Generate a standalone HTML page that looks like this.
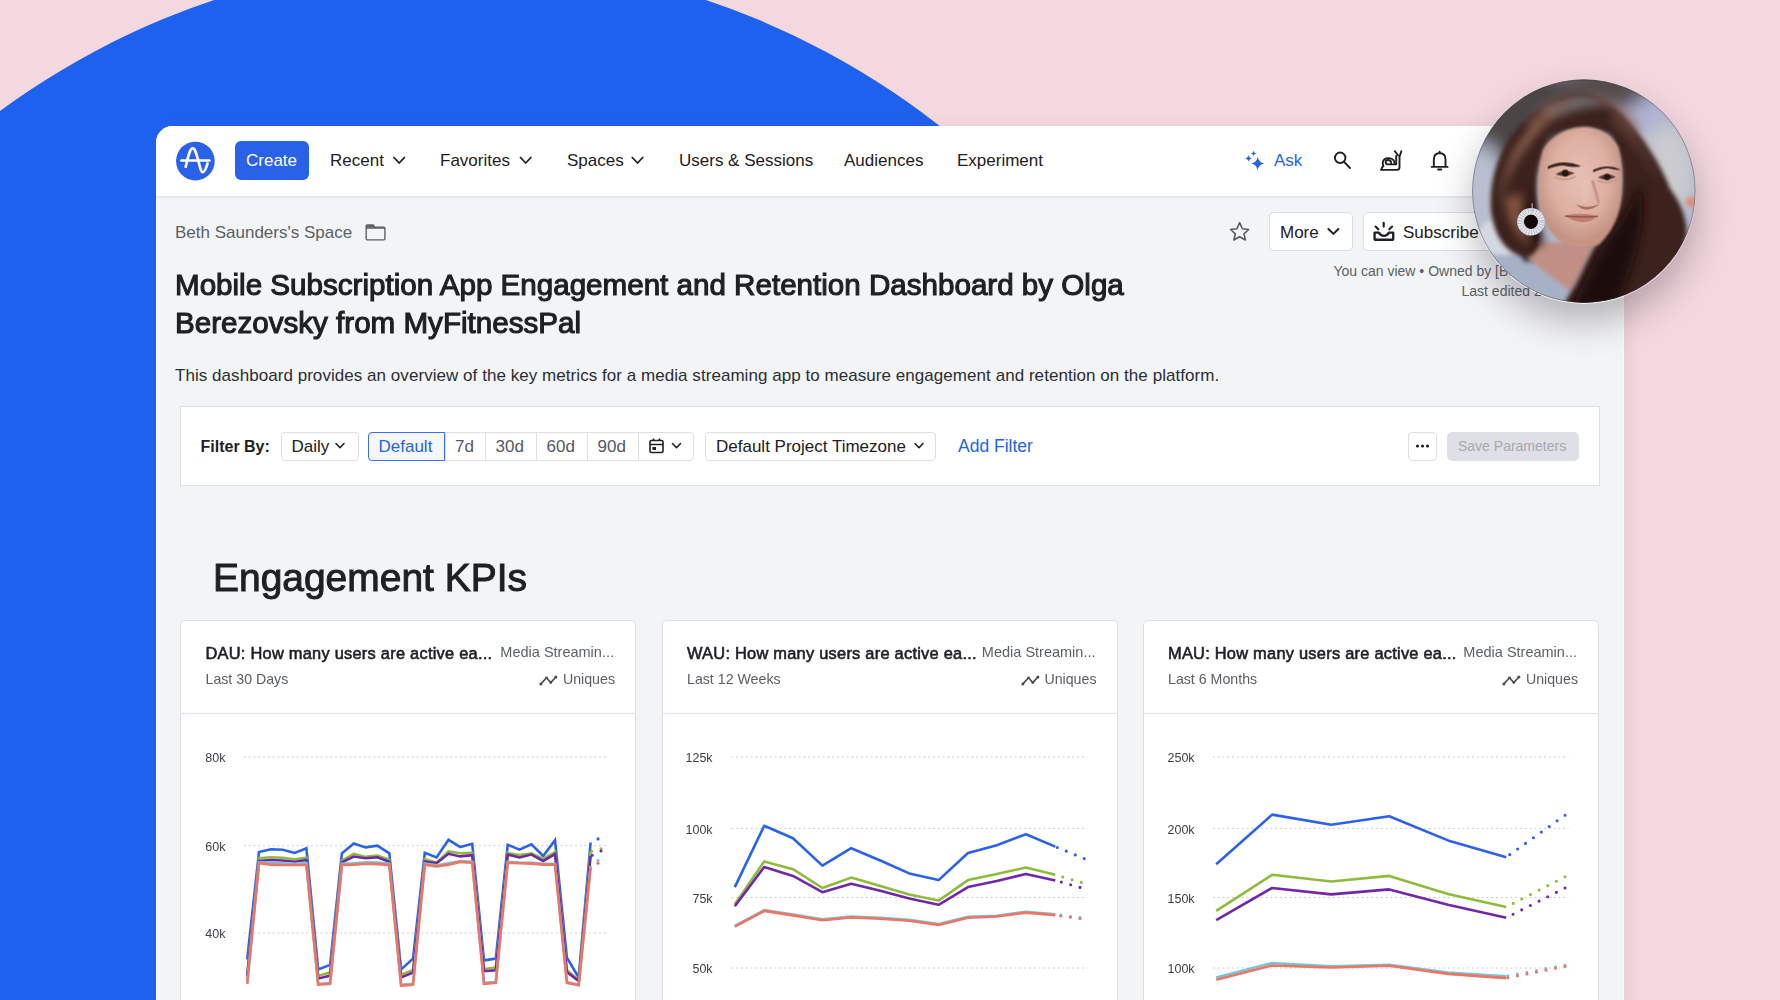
<!DOCTYPE html>
<html><head><meta charset="utf-8">
<style>
*{box-sizing:border-box;margin:0;padding:0}
html,body{width:1780px;height:1000px;overflow:hidden}
body{background:#f4d8df;position:relative;font-family:"Liberation Sans",sans-serif;color:#1e2024}
#blue{position:absolute;left:-316px;top:-40px;width:1552px;height:1552px;border-radius:50%;background:#1f61ef}
#win{position:absolute;left:156px;top:126px;width:1468px;height:900px;background:#f3f4f6;border-radius:17px 17px 0 0;overflow:hidden;box-shadow:inset 1px 0 0 #fff,inset -1px 0 0 #f8f9fa,5px 0 14px rgba(120,50,70,0.07)}
#nav{position:absolute;left:0;top:0;width:100%;height:72px;background:#fff;border-bottom:2px solid #e6e8eb}
.t{position:absolute;white-space:nowrap;line-height:1}
.nav{font-size:17px;color:#1e2024}
.lab{font-size:12.5px;color:#3c3f44}
svg{position:absolute;overflow:visible}
</style></head>
<body>
<div id="blue"></div>
<div id="win">
  <div id="nav"></div>
</div>
<!-- NAV -->
<svg style="left:172px;top:138px;width:48px;height:48px" viewBox="0 0 1000 1000">
  <circle cx="487" cy="480" r="403" fill="#2962e9"/>
  <path d="M195 470 L780 470" stroke="#fff" stroke-width="52" stroke-linecap="round" fill="none"/>
  <path d="M285 600 C330 420 370 215 430 215 C490 215 520 380 560 520 C590 640 610 710 640 710 C690 710 720 600 740 530" stroke="#fff" stroke-width="56" stroke-linecap="round" fill="none"/>
</svg>
<div style="position:absolute;left:235px;top:141px;width:74px;height:39px;background:#2962e9;border-radius:6px"></div>
<div class="t nav" style="left:246px;top:152px;color:#fff">Create</div>
<div class="t nav" style="left:330px;top:152px">Recent</div>
<div class="t nav" style="left:440px;top:152px">Favorites</div>
<div class="t nav" style="left:567px;top:152px">Spaces</div>
<div class="t nav" style="left:679px;top:152px">Users &amp; Sessions</div>
<div class="t nav" style="left:844px;top:152px">Audiences</div>
<div class="t nav" style="left:957px;top:152px">Experiment</div>
<svg style="left:0;top:0;width:1780px;height:1000px" viewBox="0 0 1780 1000">
  <g stroke="#1e2024" stroke-width="1.8" fill="none" stroke-linecap="round" stroke-linejoin="round">
    <path d="M394 157.5 L399.2 163 L404.4 157.5"/>
    <path d="M520.5 157.5 L525.7 163 L530.9 157.5"/>
    <path d="M632.3 157.5 L637.5 163 L642.7 157.5"/>
  </g>
</svg>
<svg style="left:1240px;top:145px;width:70px;height:30px" viewBox="0 0 1780 763">
  <g fill="#2563eb">
    <path d="M450 300 Q470 450 620 470 Q470 490 445 650 Q430 490 280 470 Q430 450 450 300Z"/>
    <path d="M215 245 Q225 330 310 340 Q225 350 215 435 Q205 350 125 340 Q205 330 215 245Z"/>
    <path d="M345 145 Q353 207 420 215 Q353 223 345 285 Q337 223 275 215 Q337 207 345 145Z"/>
  </g>
</svg>
<div class="t nav" style="left:1274px;top:151.5px;color:#2563eb">Ask</div>
<svg style="left:1325px;top:145px;width:130px;height:32px" viewBox="0 0 1780 438">
  <g stroke="#1e2024" stroke-width="26" fill="none" stroke-linecap="round" stroke-linejoin="round">
    <circle cx="208" cy="175" r="72"/>
    <path d="M265 235 L342 315"/>
    <path d="M770 340 L985 340 Q1020 340 1020 305 L1020 160 M1020 160 L1045 85 M1000 140 L955 85 M975 150 L975 265 L870 265 Q830 265 830 235 Q830 205 865 205 Q905 205 905 245"/>
    <path d="M770 340 Q780 300 800 290 Q790 270 790 240 Q800 180 870 180 Q950 180 955 260"/>
    <path d="M1490 295 L1490 200 Q1490 115 1570 110 Q1650 115 1650 200 L1650 295 M1462 300 L1678 300 M1570 90 L1570 108"/>
    <path d="M1548 335 L1592 335"/>
  </g>
</svg>

<!-- HEADER -->
<div class="t" style="left:175px;top:224px;font-size:17px;color:#5b5f66">Beth Saunders's Space</div>
<svg style="left:360px;top:218px;width:32px;height:28px" viewBox="0 0 1143 1000">
  <path d="M220 740 L220 290 Q220 250 260 250 L470 250 L530 330 L850 330 Q890 330 890 370 L890 740 Q890 780 850 780 L260 780 Q220 780 220 740 Z M220 355 L890 355" stroke="#5b5f66" stroke-width="50" fill="none" stroke-linejoin="round"/>
  <path d="M220 260 L480 260 L530 340 L220 340Z" fill="#5b5f66"/>
</svg>
<div class="t" style="left:175px;top:270px;font-size:30px;font-weight:400;color:#1e2024;-webkit-text-stroke:1.15px #1e2024;transform:scaleX(0.986);transform-origin:0 0">Mobile Subscription App Engagement and Retention Dashboard by Olga</div>
<div class="t" style="left:175px;top:308.3px;font-size:30px;font-weight:400;color:#1e2024;-webkit-text-stroke:1.15px #1e2024;transform:scaleX(0.986);transform-origin:0 0">Berezovsky from MyFitnessPal</div>
<div class="t" style="left:175px;top:366.6px;font-size:17px;color:#2b2e33;letter-spacing:0.05px">This dashboard provides an overview of the key metrics for a media streaming app to measure engagement and retention on the platform.</div>
<svg style="left:1225px;top:215px;width:175px;height:33px" viewBox="0 0 1780 336">
  <path d="M148 78 L176 140 L240 148 L192 192 L207 255 L148 222 L89 255 L104 192 L56 148 L120 140 Z" stroke="#55595f" stroke-width="16" fill="none" stroke-linejoin="round"/>
</svg>
<div style="position:absolute;left:1269px;top:212px;width:84px;height:39px;background:#fff;border:1px solid #dadde2;border-radius:5px"></div>
<div class="t" style="left:1280px;top:223.5px;font-size:17px;color:#1e2024">More</div>
<div style="position:absolute;left:1363px;top:212px;width:160px;height:39px;background:#fff;border:1px solid #dadde2;border-radius:5px"></div>
<div class="t" style="left:1403px;top:223.5px;font-size:17px;color:#1e2024">Subscribe</div>
<svg style="left:1225px;top:215px;width:175px;height:33px" viewBox="0 0 1780 336">
  <g stroke="#1e2024" stroke-width="20" fill="none" stroke-linecap="round" stroke-linejoin="round">
    <path d="M1052 142 L1103 192 L1154 142"/>
    <path d="M1522 180 L1522 238 Q1522 252 1536 252 L1698 252 Q1712 252 1712 238 L1712 180 L1668 180 Q1650 212 1617 212 Q1584 212 1566 180 Z" stroke-width="24"/>
    <path d="M1615 80 L1615 118 M1532 118 L1560 146 M1700 118 L1672 146" stroke-width="22"/>
  </g>
</svg>
<div class="t" style="left:1333.5px;top:263.5px;font-size:14px;color:#5b5f66">You can view &#8226; Owned by [Beth Saunders]</div>
<div class="t" style="left:1461.5px;top:283.5px;font-size:14px;color:#5b5f66">Last edited 2 days ago</div>


<!-- PHOTO -->
<div style="position:absolute;left:1472px;top:80px;width:224px;height:224px;border-radius:50%;box-shadow:0 18px 36px rgba(35,30,40,0.30)"></div>
<svg style="left:1470px;top:78px;width:230px;height:230px" viewBox="0 0 1000 1000">
  <defs>
    <clipPath id="pc"><circle cx="495" cy="492" r="485"/></clipPath>
    <filter id="b40" x="-50%" y="-50%" width="200%" height="200%"><feGaussianBlur stdDeviation="40"/></filter>
    <filter id="b20" x="-50%" y="-50%" width="200%" height="200%"><feGaussianBlur stdDeviation="20"/></filter>
    <filter id="b10" x="-50%" y="-50%" width="200%" height="200%"><feGaussianBlur stdDeviation="10"/></filter>
    <filter id="b5" x="-50%" y="-50%" width="200%" height="200%"><feGaussianBlur stdDeviation="5"/></filter>
    <filter id="b3" x="-50%" y="-50%" width="200%" height="200%"><feGaussianBlur stdDeviation="3"/></filter>
    <radialGradient id="face" cx="0.5" cy="0.42" r="0.62">
      <stop offset="0" stop-color="#e6c0b4"/><stop offset="0.55" stop-color="#ddb0a2"/><stop offset="1" stop-color="#b88676"/>
    </radialGradient>
  </defs>
  <g clip-path="url(#pc)">
    <rect x="0" y="0" width="1000" height="1000" fill="#b0b6c6"/>
    <g filter="url(#b40)">
      <ellipse cx="230" cy="170" rx="300" ry="210" fill="#4c4544"/>
      <ellipse cx="590" cy="40" rx="200" ry="110" fill="#544e4d"/>
      <ellipse cx="770" cy="160" rx="80" ry="70" fill="#aeb2d4"/>
      <ellipse cx="860" cy="400" rx="120" ry="200" fill="#cbcbd0"/>
      <ellipse cx="60" cy="470" rx="80" ry="190" fill="#b9c0d2"/>
      <ellipse cx="120" cy="740" rx="110" ry="90" fill="#d3d7e0"/>
    </g>
    <circle cx="962" cy="540" r="22" fill="#e08a70" filter="url(#b10)"/>
    <g filter="url(#b10)">
      <path d="M0 620 C80 660 160 720 240 790 C320 850 420 890 500 930 L580 1000 L0 1000 Z" fill="#a6b1c6"/>
      <ellipse cx="140" cy="690" rx="110" ry="80" fill="#d4d8e1"/>
      <path d="M210 720 L300 725 L320 810 L230 800 Z" fill="#3e4452"/>
      <path d="M210 700 C300 715 420 725 540 700 C520 780 480 860 445 935 C420 915 400 900 380 885 C330 850 290 815 260 790 Z" fill="#c09085"/>
    </g>
    <g filter="url(#b10)">
      <path d="M480 66 C560 70 630 110 700 200 C770 290 830 380 870 480 C930 560 960 660 930 740 C890 830 830 900 760 1000 L400 1000 C420 960 440 930 460 900 C500 820 530 750 560 700 C630 620 660 540 660 470 C665 380 650 310 610 250 C560 215 420 205 340 250 C300 330 285 430 292 520 C298 600 300 660 300 720 C280 790 240 790 190 760 C120 720 90 620 90 540 C90 420 130 320 190 240 C260 150 380 70 480 66 Z" fill="#3a211b"/>
    </g>
    <g filter="url(#b20)">
      <path d="M300 130 C400 70 540 60 640 110 C560 120 460 130 360 180 Z" fill="#6c6668"/>
      <path d="M420 120 C320 160 230 240 180 340 C150 410 130 480 125 550 C150 450 200 350 260 280 C310 220 360 170 420 120 Z" fill="#8d5e4e"/>
      <path d="M620 150 C710 230 790 340 830 470 C790 370 710 270 620 190 Z" fill="#6a463a"/>
      <path d="M570 740 C640 650 700 560 740 460 C770 600 730 760 640 1000 L440 1000 C480 920 530 820 570 740 Z" fill="#1a0c09"/>
      <path d="M150 520 C160 600 190 680 250 720 C260 640 250 560 240 500 Z" fill="#85543f"/>
      <path d="M252 214 C290 160 360 110 457 87 C520 80 600 100 662 146 C700 180 720 210 730 231" stroke="#8e6457" stroke-width="26" fill="none" opacity="0.75"/>
      <path d="M200 330 C240 250 300 190 380 150" stroke="#9a6e5e" stroke-width="18" fill="none" opacity="0.7"/>
      <path d="M430 100 C470 90 520 95 560 110" stroke="#6e6a70" stroke-width="30" fill="none" opacity="0.8"/>
      <path d="M240 480 C270 560 300 640 320 720 C280 740 250 700 230 640 C215 580 220 520 240 480 Z" fill="#1e0f0c"/>
    </g>
    <g filter="url(#b5)">
      <path d="M500 212 C560 215 610 245 645 300 C665 380 665 470 655 540 C645 620 600 690 560 725 C520 740 460 742 410 720 C360 690 320 630 305 560 C292 480 296 400 312 330 C330 260 420 212 500 212 Z" fill="url(#face)"/>
    </g>
    <g filter="url(#b3)">
      <path d="M338 384 Q405 352 482 382 Q470 392 405 380 Q360 384 338 396 Z" fill="#3a221d"/>
      <path d="M536 398 Q600 370 655 398 Q640 402 600 392 Q560 396 536 410 Z" fill="#3a221d"/>
      <path d="M372 418 Q410 392 456 414 Q412 436 372 418 Z" fill="#5a3a32"/>
      <circle cx="414" cy="414" r="15" fill="#24120e"/>
      <path d="M556 432 Q594 408 634 430 Q596 452 556 432 Z" fill="#5a3a32"/>
      <circle cx="596" cy="430" r="14" fill="#24120e"/>
      <path d="M368 432 Q412 452 460 428" stroke="#c49282" stroke-width="6" fill="none"/>
      <path d="M552 446 Q596 464 638 444" stroke="#c49282" stroke-width="6" fill="none"/>
      <ellipse cx="502" cy="490" rx="20" ry="55" fill="#e8c2b4" opacity="0.6"/>
      <path d="M532 445 C545 490 556 520 558 545" stroke="#c8988a" stroke-width="14" fill="none"/>
      <path d="M462 548 Q505 572 562 548 Q540 570 505 572 Q480 570 462 548 Z" fill="#a8705f"/>
      <path d="M412 598 Q480 580 556 600 Q500 655 412 598 Z" fill="#bf7f70"/>
      <path d="M412 600 Q484 606 556 601" stroke="#8a5044" stroke-width="5" fill="none"/>
      <path d="M330 640 Q450 760 600 660 Q560 740 470 735 Q380 720 330 640 Z" fill="#c79484"/>
    </g>
    <circle cx="265" cy="625" r="45" fill="none" stroke="#e4e6ee" stroke-width="30"/>
    <circle cx="265" cy="625" r="45" fill="none" stroke="#7f8490" stroke-width="30" stroke-dasharray="3 8" opacity="0.5"/>
    <circle cx="265" cy="625" r="30" fill="#140808"/>
    <path d="M270 545 L270 580" stroke="#bbb" stroke-width="5"/>
  </g>
  <circle cx="495" cy="492" r="484" fill="none" stroke="rgba(50,50,60,0.45)" stroke-width="4"/>
</svg>

<!-- FILTER -->
<div style="position:absolute;left:180px;top:406px;width:1420px;height:80px;background:#fff;border:1px solid #dcdfe4"></div>
<div class="t" style="left:200.5px;top:439px;font-size:16px;font-weight:700;color:#1e2024">Filter By:</div>
<div style="position:absolute;left:281px;top:432px;width:78px;height:29px;background:#fff;border:1px solid #dcdfe4;border-radius:4px"></div>
<div class="t" style="left:291.5px;top:438.3px;font-size:17px;color:#1e2024">Daily</div>
<div style="position:absolute;left:368px;top:432px;width:326px;height:29px;background:#fff;border:1px solid #dcdfe4;border-radius:4px"></div>
<div style="position:absolute;left:445px;top:432px;width:1px;height:29px;background:#dcdfe4"></div>
<div style="position:absolute;left:485px;top:432px;width:1px;height:29px;background:#dcdfe4"></div>
<div style="position:absolute;left:536px;top:432px;width:1px;height:29px;background:#dcdfe4"></div>
<div style="position:absolute;left:587px;top:432px;width:1px;height:29px;background:#dcdfe4"></div>
<div style="position:absolute;left:638px;top:432px;width:1px;height:29px;background:#dcdfe4"></div>
<div style="position:absolute;left:368px;top:432px;width:77px;height:29px;background:#f5f7fc;border:1.5px solid #3b6fe6;border-radius:4px 0 0 4px"></div>
<div class="t" style="left:378.5px;top:438.3px;font-size:17px;color:#2563eb">Default</div>
<div class="t" style="left:455px;top:438.3px;font-size:17px;color:#55595f">7d</div>
<div class="t" style="left:495.5px;top:438.3px;font-size:17px;color:#55595f">30d</div>
<div class="t" style="left:546.5px;top:438.3px;font-size:17px;color:#55595f">60d</div>
<div class="t" style="left:597.5px;top:438.3px;font-size:17px;color:#55595f">90d</div>
<div style="position:absolute;left:705px;top:432px;width:231px;height:29px;background:#fff;border:1px solid #dcdfe4;border-radius:4px"></div>
<div class="t" style="left:716px;top:438.3px;font-size:17px;color:#1e2024">Default Project Timezone</div>
<div class="t" style="left:958px;top:437.8px;font-size:17.5px;color:#2563eb">Add Filter</div>
<div style="position:absolute;left:1408px;top:432px;width:29px;height:29px;background:#fff;border:1px solid #dcdfe4;border-radius:4px"></div>
<div style="position:absolute;left:1447px;top:431.5px;width:132px;height:29px;background:#dfe0e5;border-radius:5px"></div>
<div class="t" style="left:1458px;top:439.4px;font-size:14px;color:#a6a8b0">Save Parameters</div>
<svg style="left:0;top:0;width:1780px;height:1000px" viewBox="0 0 1780 1000">
  <g stroke="#1e2024" stroke-width="1.6" fill="none" stroke-linecap="round" stroke-linejoin="round">
    <path d="M336 443.5 L340 447.7 L344 443.5"/>
    <path d="M915 443.5 L919 447.7 L923 443.5"/>
    <path d="M672.5 443.5 L676.5 447.7 L680.5 443.5"/>
  </g>
  <g fill="#1e2024">
    <circle cx="1417.5" cy="446" r="1.6"/><circle cx="1422.5" cy="446" r="1.6"/><circle cx="1427.5" cy="446" r="1.6"/>
  </g>
  <g stroke="#1e2024" fill="none" stroke-width="1.6">
    <rect x="650" y="440.5" width="13" height="12" rx="1.5"/>
    <path d="M650 444.5 L663 444.5 M653.5 438.5 L653.5 441 M659.5 438.5 L659.5 441"/>
  </g>
  <rect x="652.5" y="447" width="3.5" height="3" fill="#1e2024"/>
</svg>
<!-- SECTION -->
<div class="t" style="left:212.5px;top:558.1px;font-size:39.5px;font-weight:400;color:#1e2024;-webkit-text-stroke:1px #1e2024;transform:scaleX(0.986);transform-origin:0 0">Engagement KPIs</div>
<div style="position:absolute;left:180px;top:620px;width:456px;height:420px;background:#fff;border:1px solid #dcdfe4;border-radius:5px"></div>
<div style="position:absolute;left:180.5px;top:713px;width:455.5px;height:1px;background:#e0e2e6"></div>
<div class="t" style="left:205.5px;top:644.8px;font-size:16.4px;font-weight:400;color:#1e2024;letter-spacing:0.25px;-webkit-text-stroke:0.6px #1e2024">DAU: How many users are active ea...</div>
<div class="t" style="right:1166px;top:645.2px;font-size:14.5px;color:#5b5f66">Media Streamin...</div>
<div class="t" style="left:205.5px;top:672.4px;font-size:14.2px;color:#5b5f66">Last 30 Days</div>
<div class="t" style="right:1165px;top:672.4px;font-size:14.2px;color:#5b5f66">Uniques</div>
<svg style="left:539px;top:673px;width:20px;height:14px" viewBox="0 0 20 14"><path d="M1.9 10.9 L7.5 4.8 L11.8 9.6 L16.9 4" stroke="#4a4d53" stroke-width="1.6" fill="none" stroke-linejoin="round" stroke-linecap="round"/><g fill="#4a4d53"><circle cx="1.9" cy="10.9" r="1.5"/><circle cx="7.5" cy="4.8" r="1.3"/><circle cx="11.8" cy="9.6" r="1.3"/><circle cx="16.9" cy="4" r="1.5"/></g></svg>
<div style="position:absolute;left:661.5px;top:620px;width:456px;height:420px;background:#fff;border:1px solid #dcdfe4;border-radius:5px"></div>
<div style="position:absolute;left:662px;top:713px;width:455.5px;height:1px;background:#e0e2e6"></div>
<div class="t" style="left:687px;top:644.8px;font-size:16.4px;font-weight:400;color:#1e2024;letter-spacing:0.25px;-webkit-text-stroke:0.6px #1e2024">WAU: How many users are active ea...</div>
<div class="t" style="right:684.5px;top:645.2px;font-size:14.5px;color:#5b5f66">Media Streamin...</div>
<div class="t" style="left:687px;top:672.4px;font-size:14.2px;color:#5b5f66">Last 12 Weeks</div>
<div class="t" style="right:683.5px;top:672.4px;font-size:14.2px;color:#5b5f66">Uniques</div>
<svg style="left:1020.5px;top:673px;width:20px;height:14px" viewBox="0 0 20 14"><path d="M1.9 10.9 L7.5 4.8 L11.8 9.6 L16.9 4" stroke="#4a4d53" stroke-width="1.6" fill="none" stroke-linejoin="round" stroke-linecap="round"/><g fill="#4a4d53"><circle cx="1.9" cy="10.9" r="1.5"/><circle cx="7.5" cy="4.8" r="1.3"/><circle cx="11.8" cy="9.6" r="1.3"/><circle cx="16.9" cy="4" r="1.5"/></g></svg>
<div style="position:absolute;left:1143px;top:620px;width:456px;height:420px;background:#fff;border:1px solid #dcdfe4;border-radius:5px"></div>
<div style="position:absolute;left:1143px;top:713px;width:456px;height:1px;background:#e0e2e6"></div>
<div class="t" style="left:1168px;top:644.8px;font-size:16.4px;font-weight:400;color:#1e2024;letter-spacing:0.25px;-webkit-text-stroke:0.6px #1e2024">MAU: How many users are active ea...</div>
<div class="t" style="right:203px;top:645.2px;font-size:14.5px;color:#5b5f66">Media Streamin...</div>
<div class="t" style="left:1168px;top:672.4px;font-size:14.2px;color:#5b5f66">Last 6 Months</div>
<div class="t" style="right:202px;top:672.4px;font-size:14.2px;color:#5b5f66">Uniques</div>
<svg style="left:1502px;top:673px;width:20px;height:14px" viewBox="0 0 20 14"><path d="M1.9 10.9 L7.5 4.8 L11.8 9.6 L16.9 4" stroke="#4a4d53" stroke-width="1.6" fill="none" stroke-linejoin="round" stroke-linecap="round"/><g fill="#4a4d53"><circle cx="1.9" cy="10.9" r="1.5"/><circle cx="7.5" cy="4.8" r="1.3"/><circle cx="11.8" cy="9.6" r="1.3"/><circle cx="16.9" cy="4" r="1.5"/></g></svg>

<!-- CHARTS -->
<div class="t lab" style="right:1554.6px;top:752.1px">80k</div>
<div class="t lab" style="right:1554.6px;top:840.8px">60k</div>
<div class="t lab" style="right:1554.6px;top:928.1px">40k</div>
<div class="t lab" style="right:1067.4px;top:752.1px">125k</div>
<div class="t lab" style="right:1067.4px;top:823.5px">100k</div>
<div class="t lab" style="right:1067.4px;top:892.6px">75k</div>
<div class="t lab" style="right:1067.4px;top:963.1px">50k</div>
<div class="t lab" style="right:585.4px;top:752.1px">250k</div>
<div class="t lab" style="right:585.4px;top:823.5px">200k</div>
<div class="t lab" style="right:585.4px;top:892.6px">150k</div>
<div class="t lab" style="right:585.4px;top:963.1px">100k</div>
<svg style="left:0;top:0;width:1780px;height:1000px" viewBox="0 0 1780 1000"><path d="M243.8 757 L607 757" stroke="#c9ccd1" stroke-width="1" stroke-dasharray="2 2.8"/><path d="M243.8 845.7 L607 845.7" stroke="#c9ccd1" stroke-width="1" stroke-dasharray="2 2.8"/><path d="M243.8 933 L607 933" stroke="#c9ccd1" stroke-width="1" stroke-dasharray="2 2.8"/><path d="M731.4 757 L1087 757" stroke="#c9ccd1" stroke-width="1" stroke-dasharray="2 2.8"/><path d="M731.4 828.4 L1087 828.4" stroke="#c9ccd1" stroke-width="1" stroke-dasharray="2 2.8"/><path d="M731.4 897.5 L1087 897.5" stroke="#c9ccd1" stroke-width="1" stroke-dasharray="2 2.8"/><path d="M731.4 968 L1087 968" stroke="#c9ccd1" stroke-width="1" stroke-dasharray="2 2.8"/><path d="M1212.8 757 L1568.4 757" stroke="#c9ccd1" stroke-width="1" stroke-dasharray="2 2.8"/><path d="M1212.8 828.4 L1568.4 828.4" stroke="#c9ccd1" stroke-width="1" stroke-dasharray="2 2.8"/><path d="M1212.8 897.5 L1568.4 897.5" stroke="#c9ccd1" stroke-width="1" stroke-dasharray="2 2.8"/><path d="M1212.8 968 L1568.4 968" stroke="#c9ccd1" stroke-width="1" stroke-dasharray="2 2.8"/><path d="M247.2 959.5 L259.0 852.0 L270.9 849.3 L282.7 849.7 L294.6 852.9 L306.4 848.3 L318.2 969.4 L330.1 964.9 L341.9 853.3 L353.8 843.4 L365.6 847.4 L377.4 845.6 L389.3 853.3 L401.1 969.4 L413.0 958.6 L424.8 852.9 L436.6 857.4 L448.5 839.8 L460.3 847.0 L472.2 843.8 L484.0 960.4 L495.8 958.6 L507.7 844.8 L519.5 849.7 L531.4 844.3 L543.2 856.0 L555.0 840.2 L566.9 957.7 L578.7 977.5 L590.6 842.5" stroke="#2c62e9" stroke-width="2.6" fill="none" stroke-linejoin="miter" stroke-miterlimit="3"/><path d="M598 838.9 L590.6 842.5" stroke="#2c62e9" stroke-width="3.1" fill="none" stroke-dasharray="0 9.7" stroke-linecap="round"/><path d="M247.2 974.8 L259.0 858.3 L270.9 857.3 L282.7 857.8 L294.6 859.2 L306.4 857.8 L318.2 975.7 L330.1 972.6 L341.9 860.5 L353.8 853.8 L365.6 856.9 L377.4 855.6 L389.3 859.6 L401.1 974.8 L413.0 970.3 L424.8 859.2 L436.6 862.8 L448.5 851.5 L460.3 853.3 L472.2 852.9 L484.0 969.0 L495.8 967.6 L507.7 852.9 L519.5 855.1 L531.4 853.3 L543.2 858.7 L555.0 852.0 L566.9 970.3 L578.7 980.2 L590.6 851.5" stroke="#8fbb3c" stroke-width="2.6" fill="none" stroke-linejoin="miter" stroke-miterlimit="3"/><path d="M601 848.8 L590.6 851.5" stroke="#8fbb3c" stroke-width="3.1" fill="none" stroke-dasharray="0 9.7" stroke-linecap="round"/><path d="M247.2 976.2 L259.0 861.0 L270.9 860.0 L282.7 860.5 L294.6 861.8 L306.4 860.0 L318.2 978.4 L330.1 975.7 L341.9 862.3 L353.8 856.5 L365.6 858.3 L377.4 857.3 L389.3 861.8 L401.1 977.5 L413.0 972.6 L424.8 861.4 L436.6 863.2 L448.5 853.8 L460.3 856.4 L472.2 855.1 L484.0 971.2 L495.8 970.3 L507.7 854.6 L519.5 857.4 L531.4 854.6 L543.2 861.0 L555.0 854.2 L566.9 972.1 L578.7 981.1 L590.6 856.0" stroke="#7326a8" stroke-width="2.6" fill="none" stroke-linejoin="miter" stroke-miterlimit="3"/><path d="M601 851.0 L590.6 856.0" stroke="#7326a8" stroke-width="3.1" fill="none" stroke-dasharray="0 9.7" stroke-linecap="round"/><path d="M247.2 982.9 L259.0 862.3 L270.9 862.8 L282.7 863.2 L294.6 863.7 L306.4 863.2 L318.2 984.1 L330.1 982.9 L341.9 863.7 L353.8 863.2 L365.6 862.3 L377.4 862.5 L389.3 863.7 L401.1 984.7 L413.0 983.8 L424.8 863.6 L436.6 865.4 L448.5 863.2 L460.3 861.0 L472.2 861.8 L484.0 982.9 L495.8 982.0 L507.7 861.8 L519.5 862.5 L531.4 862.8 L543.2 863.7 L555.0 863.7 L566.9 982.0 L578.7 984.7 L590.6 865.9" stroke="#72c7d3" stroke-width="2.6" fill="none" stroke-linejoin="miter" stroke-miterlimit="3"/><path d="M598 860.5 L590.6 865.9" stroke="#72c7d3" stroke-width="3.1" fill="none" stroke-dasharray="0 9.7" stroke-linecap="round"/><path d="M247.2 983.8 L259.0 863.2 L270.9 864.6 L282.7 865.0 L294.6 865.0 L306.4 865.0 L318.2 984.7 L330.1 983.8 L341.9 865.0 L353.8 864.6 L365.6 863.7 L377.4 864.1 L389.3 865.0 L401.1 985.6 L413.0 984.7 L424.8 864.6 L436.6 866.4 L448.5 864.6 L460.3 861.9 L472.2 862.7 L484.0 983.8 L495.8 982.9 L507.7 862.8 L519.5 863.2 L531.4 863.6 L543.2 864.6 L555.0 864.6 L566.9 982.9 L578.7 985.2 L590.6 867.7" stroke="#ee7465" stroke-width="2.6" fill="none" stroke-linejoin="miter" stroke-miterlimit="3"/><path d="M598 863.2 L590.6 867.7" stroke="#ee7465" stroke-width="3.1" fill="none" stroke-dasharray="0 9.7" stroke-linecap="round"/><path d="M734.8 887.1 L764.2 825.8 L793.0 838.2 L822.4 865.6 L851.2 848.2 L880.3 860.5 L909.2 873.4 L938.6 880.1 L968.0 853.0 L996.8 845.2 L1025.9 834.2 L1055.3 846.6" stroke="#2c62e9" stroke-width="2.6" fill="none" stroke-linejoin="round" stroke-miterlimit="3"/><path d="M1084.2 858.6 L1055.3 846.6" stroke="#2c62e9" stroke-width="3.1" fill="none" stroke-dasharray="0 9.7" stroke-linecap="round"/><path d="M734.8 904.2 L764.2 861.4 L793.0 869.2 L822.4 888.0 L851.2 877.6 L880.3 886.0 L909.2 894.4 L938.6 900.6 L968.0 880.1 L996.8 874.0 L1025.9 867.5 L1055.3 874.8" stroke="#8fbb3c" stroke-width="2.6" fill="none" stroke-linejoin="round" stroke-miterlimit="3"/><path d="M1081.4 882.4 L1055.3 874.8" stroke="#8fbb3c" stroke-width="3.1" fill="none" stroke-dasharray="0 9.7" stroke-linecap="round"/><path d="M734.8 906.2 L764.2 867.0 L793.0 875.9 L822.4 892.2 L851.2 883.8 L880.3 890.8 L909.2 898.6 L938.6 904.8 L968.0 887.1 L996.8 881.0 L1025.9 874.0 L1055.3 880.4" stroke="#7326a8" stroke-width="2.6" fill="none" stroke-linejoin="round" stroke-miterlimit="3"/><path d="M1080.0 887.4 L1055.3 880.4" stroke="#7326a8" stroke-width="3.1" fill="none" stroke-dasharray="0 9.7" stroke-linecap="round"/><path d="M734.8 925.8 L764.2 910.1 L793.0 914.6 L822.4 919.3 L851.2 916.5 L880.3 917.9 L909.2 919.9 L938.6 924.1 L968.0 916.8 L996.8 915.7 L1025.9 911.8 L1055.3 914.3" stroke="#72c7d3" stroke-width="2.6" fill="none" stroke-linejoin="round" stroke-miterlimit="3"/><path d="M1080.0 917.4 L1055.3 914.3" stroke="#72c7d3" stroke-width="3.1" fill="none" stroke-dasharray="0 9.7" stroke-linecap="round"/><path d="M734.8 926.6 L764.2 910.9 L793.0 915.4 L822.4 920.2 L851.2 917.4 L880.3 918.8 L909.2 920.7 L938.6 924.9 L968.0 917.7 L996.8 916.5 L1025.9 912.6 L1055.3 915.1" stroke="#ee7465" stroke-width="2.6" fill="none" stroke-linejoin="round" stroke-miterlimit="3"/><path d="M1080.0 918.8 L1055.3 915.1" stroke="#ee7465" stroke-width="3.1" fill="none" stroke-dasharray="0 9.7" stroke-linecap="round"/><path d="M1216.2 864.2 L1272.1 814.6 L1331.2 824.7 L1389.2 816.3 L1448.0 840.4 L1506.2 857.2" stroke="#2c62e9" stroke-width="2.6" fill="none" stroke-linejoin="round" stroke-miterlimit="3"/><path d="M1565.0 815.2 L1506.2 857.2" stroke="#2c62e9" stroke-width="3.1" fill="none" stroke-dasharray="0 9.7" stroke-linecap="round"/><path d="M1216.2 910.9 L1272.1 874.8 L1331.2 881.5 L1389.2 875.9 L1448.0 894.1 L1506.2 907.0" stroke="#8fbb3c" stroke-width="2.6" fill="none" stroke-linejoin="round" stroke-miterlimit="3"/><path d="M1565.0 876.8 L1506.2 907.0" stroke="#8fbb3c" stroke-width="3.1" fill="none" stroke-dasharray="0 9.7" stroke-linecap="round"/><path d="M1216.2 920.2 L1272.1 888.0 L1331.2 894.4 L1389.2 889.4 L1448.0 904.8 L1506.2 917.7" stroke="#7326a8" stroke-width="2.6" fill="none" stroke-linejoin="round" stroke-miterlimit="3"/><path d="M1565.0 888.0 L1506.2 917.7" stroke="#7326a8" stroke-width="3.1" fill="none" stroke-dasharray="0 9.7" stroke-linecap="round"/><path d="M1216.2 977.6 L1272.1 963.0 L1331.2 966.4 L1389.2 964.7 L1448.0 972.5 L1506.2 976.2" stroke="#72c7d3" stroke-width="2.6" fill="none" stroke-linejoin="round" stroke-miterlimit="3"/><path d="M1565.0 965.0 L1506.2 976.2" stroke="#72c7d3" stroke-width="3.1" fill="none" stroke-dasharray="0 9.7" stroke-linecap="round"/><path d="M1216.2 979.8 L1272.1 965.5 L1331.2 967.5 L1389.2 965.8 L1448.0 973.9 L1506.2 978.1" stroke="#ee7465" stroke-width="2.6" fill="none" stroke-linejoin="round" stroke-miterlimit="3"/><path d="M1565.0 966.4 L1506.2 978.1" stroke="#ee7465" stroke-width="3.1" fill="none" stroke-dasharray="0 9.7" stroke-linecap="round"/></svg>
</body></html>
